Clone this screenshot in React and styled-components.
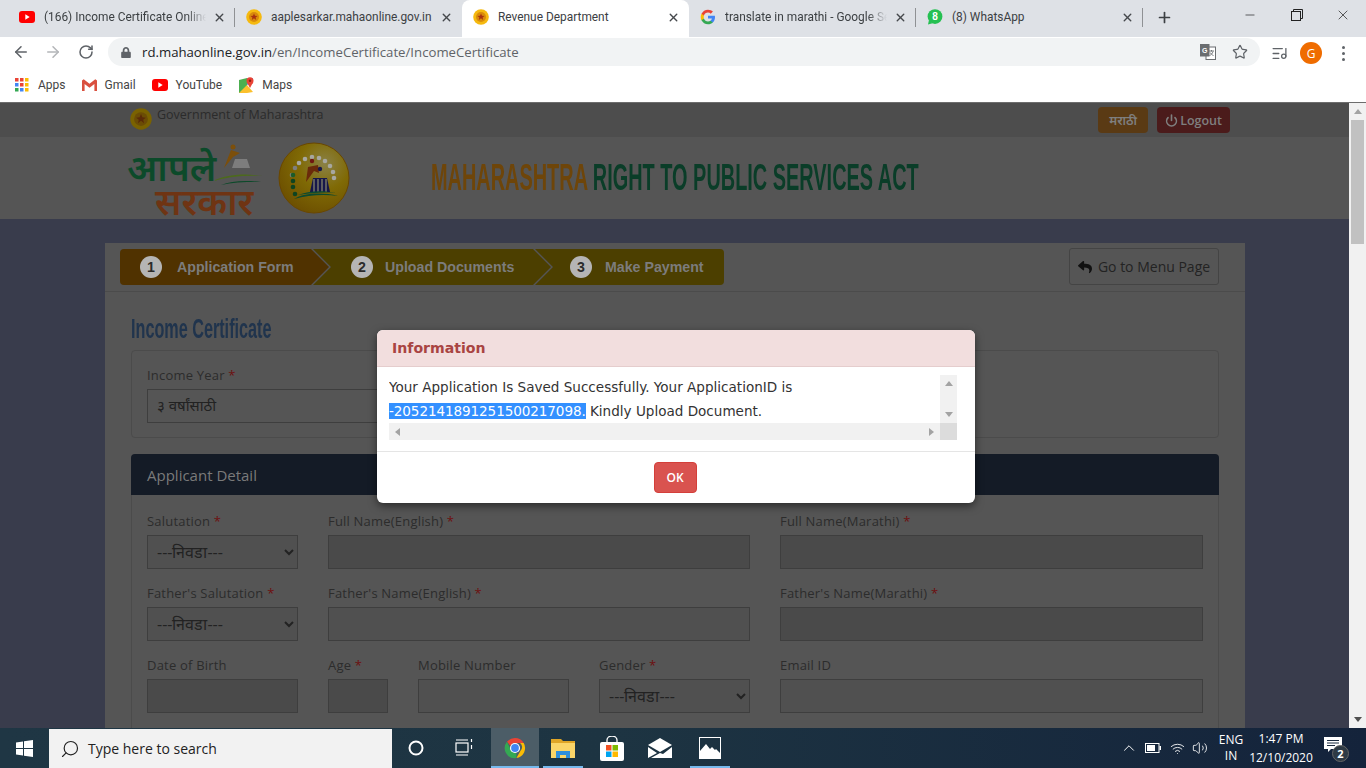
import React from "react";
import styled, { createGlobalStyle } from "styled-components";
import { ArrowLeft, ArrowRight, RotateCw, Star, X, Plus, Minus, ChevronUp, Power, ListMusic, Search, Volume2, Wifi } from "lucide-react";
import { FaReply, FaLock } from "react-icons/fa";

const GlobalStyle = createGlobalStyle`
  html, body { margin: 0; padding: 0; overflow: hidden; }
  * { box-sizing: border-box; }
  body { font-family: "Open Sans", "Noto Sans", sans-serif; }
`;

const Screen = styled.div`
  width: 1366px;
  height: 768px;
  display: flex;
  flex-direction: column;
  overflow: hidden;
  background: #fff;
`;

/* browser chrome */
const TabStrip = styled.div`
  height: 37px;
  flex: none;
  background: #dee1e6;
  display: flex;
  padding-left: 8px;
  color: #3c4043;
`;

const Tab = styled.div`
  width: 227px;
  height: 37px;
  padding: 0 9px 3px 11px;
  display: flex;
  align-items: center;
  gap: 9px;
  position: relative;
  font-family: Roboto, "Open Sans", sans-serif;
  font-size: 11.9px;
  background: ${(p) => (p.$active ? "#fff" : "transparent")};
  border-radius: ${(p) => (p.$active ? "8px 8px 0 0" : "0")};

  &::after {
    content: "";
    display: ${(p) => (p.$sep ? "block" : "none")};
    position: absolute;
    right: 0;
    top: 8px;
    height: 19px;
    width: 1px;
    background: #8f9194;
  }
`;

const TabTitle = styled.span`
  flex: 1;
  min-width: 0;
  white-space: nowrap;
  overflow: hidden;
  ${(p) =>
    p.$fade &&
    "-webkit-mask-image: linear-gradient(90deg, #000 88%, transparent); mask-image: linear-gradient(90deg, #000 88%, transparent);"}
`;

const TabClose = styled(X)`
  flex: none;
  width: 13px;
  height: 13px;
  margin-left: -2px;
  color: #45484c;
  stroke-width: 2.6;
`;

const NewTab = styled(Plus)`
  width: 17px;
  height: 17px;
  margin: 9px 0 0 13px;
  color: #3c4043;
  stroke-width: 2.4;
`;

const WindowControls = styled.div`
  margin-left: auto;
  display: flex;
  height: 30px;
`;

const WindowButton = styled.div`
  width: 46.5px;
  display: flex;
  align-items: center;
  justify-content: center;
  color: #222;
`;

const Toolbar = styled.div`
  height: 34px;
  flex: none;
  display: flex;
  padding: 1px 0 0 5px;
  background: #fff;
`;

const NavButton = styled.div`
  width: 32px;
  height: 28px;
  flex: none;
  display: flex;
  align-items: center;
  justify-content: center;
  color: ${(p) => (p.$off ? "#b4b6b9" : "#5f6368")};
`;

const Omnibox = styled.div`
  width: 1152px;
  height: 28px;
  margin-left: 7px;
  padding: 0 13px;
  flex: none;
  display: flex;
  align-items: center;
  background: #f1f3f4;
  border-radius: 14px;
  font-size: 13.2px;
  color: #5f6368;
`;

const LockIcon = styled(FaLock)`
  width: 10px;
  height: 11px;
  color: #5f6368;
  margin: 0 11px 0 0;
`;

const UrlHost = styled.span`
  color: #202124;
`;

const OmniActions = styled.div`
  margin-left: auto;
  display: flex;
  align-items: center;
  gap: 16px;
  margin-right: -1px;
  color: #5f6368;
`;

const Avatar = styled.div`
  width: 22px;
  height: 22px;
  margin: 0 12px;
  border-radius: 50%;
  background: #ef6c00;
  color: #fff;
  font-size: 12px;
  display: flex;
  align-items: center;
  justify-content: center;
`;

const ToolbarRight = styled.div`
  display: flex;
  align-items: center;
  height: 30px;
  padding-left: 11px;
  color: #5f6368;
`;

const Dots = styled.div`
  display: grid;
  gap: 3px;
  margin-left: 8px;

  i {
    display: block;
    width: 3px;
    height: 3px;
    border-radius: 50%;
    background: #5f6368;
  }
`;

const Bookmarks = styled.div`
  height: 32px;
  flex: none;
  display: flex;
  align-items: center;
  padding: 0 0 3px 15px;
  font-family: Roboto, "Open Sans", sans-serif;
  font-size: 12px;
  color: #444;
  background: #fff;
  border-bottom: 1px solid #6d6d6d;
`;

const Bookmark = styled.div`
  display: flex;
  align-items: center;
  gap: ${(p) => p.$inner || 8}px;
  margin-right: ${(p) => p.$gap}px;
`;

/* page */
const PageArea = styled.div`
  flex: 1;
  min-height: 0;
  display: flex;
`;

const Viewport = styled.div`
  flex: 1;
  min-width: 0;
  position: relative;
  overflow: hidden;
  background: #393c4c;
`;

const Scrollbar = styled.div`
  width: 17px;
  flex: none;
  display: flex;
  flex-direction: column;
  align-items: center;
  background: #f1f1f1;
  padding-top: 6px;
`;

const ArrowUp = styled.div`
  width: 0;
  height: 0;
  border-left: 4px solid transparent;
  border-right: 4px solid transparent;
  border-bottom: 5px solid #a3a3a3;
`;

const ArrowDown = styled.div`
  width: 0;
  height: 0;
  margin-top: auto;
  margin-bottom: 6px;
  border-left: 4px solid transparent;
  border-right: 4px solid transparent;
  border-top: 5px solid #505050;
`;

const Thumb = styled.div`
  width: 13px;
  height: 124px;
  margin-top: 6px;
  background: #c1c1c1;
`;

const TopBar = styled.div`
  height: 34px;
  padding: 4px 119px 0 130px;
  display: flex;
  background: #4d4d4d;
  font-size: 12.5px;
  color: #2b2b2b;
`;

const GovName = styled.span`
  margin: 1px 0 0 5px;
  line-height: 14px;
`;

const TopBarActions = styled.div`
  margin-left: auto;
  display: flex;
  gap: 9px;
`;

const TopButton = styled.div`
  height: 26px;
  padding: 0 ${(p) => p.$pad}px;
  display: flex;
  align-items: center;
  gap: 2px;
  border-radius: 4px;
  font-size: 12.5px;
  font-weight: 600;
  color: #7f7f7f;
  background: ${(p) => p.$bg};
`;

const SiteHeader = styled.div`
  height: 82px;
  background: #555;
  display: flex;
  align-items: center;
  padding-left: 127px;
`;

const LogoText = styled.div`
  width: 136px;
  height: 74px;
  padding-top: 6px;
  position: relative;
  font-family: "Noto Sans", "Liberation Sans", sans-serif;
  font-weight: 600;
  margin-top: 6px;
`;

const LogoLine = styled.div`
  font-size: ${(p) => p.$size}px;
  line-height: 34px;
  color: ${(p) => p.$color};
  margin-left: ${(p) => p.$left}px;
  white-space: nowrap;
`;

const LogoDome = styled.svg`
  position: absolute;
  right: 0;
  top: 0;
`;

const SiteTitle = styled.h1`
  margin: 0 0 0 81px;
  font-family: "Liberation Sans", Arial, sans-serif;
  font-weight: 700;
  font-size: 36px;
  line-height: 40px;
  white-space: nowrap;
  color: #0a3d28;
  transform: scaleX(0.553);
  transform-origin: left;

  span {
    color: #6e4509;
  }
`;

const Main = styled.div`
  padding: 24px 104px 0 105px;
`;

const Card = styled.div`
  background: #555;
  min-height: 600px;
`;

const WizardRow = styled.div`
  height: 49px;
  padding: 5px 26px 0 15px;
  display: flex;
  justify-content: space-between;
  border-bottom: 1px solid #4b4b4b;
`;

const Steps = styled.div`
  display: flex;
  height: 36px;
  margin-top: 1px;
`;

const Step = styled.div`
  width: ${(p) => p.$w}px;
  margin-left: ${(p) => (p.$first ? 0 : -16)}px;
  padding-left: ${(p) => p.$pad}px;
  display: flex;
  align-items: center;
  gap: ${(p) => p.$gap}px;
  font-family: "Liberation Sans", Arial, sans-serif;
  font-size: 14.2px;
  font-weight: 700;
  color: #7c7c7c;
  background: ${(p) => (p.$first ? "#503200" : "#4c3f00")};
  border-radius: ${(p) => (p.$first ? "4px 0 0 4px" : p.$last ? "0 4px 4px 0" : "0")};
  clip-path: ${(p) =>
    p.$first
      ? "polygon(0 0, calc(100% - 18px) 0, 100% 50%, calc(100% - 18px) 100%, 0 100%)"
      : p.$last
      ? "polygon(0 0, 100% 0, 100% 100%, 0 100%, 18px 50%)"
      : "polygon(0 0, calc(100% - 18px) 0, 100% 50%, calc(100% - 18px) 100%, 0 100%, 18px 50%)"};
`;

const StepNumber = styled.span`
  width: 22px;
  height: 22px;
  flex: none;
  border-radius: 50%;
  background: #b5b5b5;
  color: #2b2b2b;
  display: flex;
  align-items: center;
  justify-content: center;
`;

const MenuButton = styled.div`
  width: 150px;
  height: 37px;
  display: flex;
  align-items: center;
  justify-content: center;
  gap: 6px;
  border: 1px solid #444;
  border-radius: 3px;
  font-size: 14px;
  color: #232323;
`;

const CardBody = styled.div`
  padding: 0 26px;
`;

const Heading = styled.h2`
  margin: 0;
  padding-top: 22px;
  height: 58px;
  font-family: "Liberation Sans", Arial, sans-serif;
  font-weight: 700;
  font-size: 27px;
  line-height: 30px;
  white-space: nowrap;
  color: #20344d;
  transform: scaleX(0.6);
  transform-origin: left;
`;

const YearPanel = styled.div`
  height: 88px;
  padding: 14px 15px;
  border: 1px solid #4b4b4b;
  border-radius: 4px;
`;

const PanelHead = styled.div`
  height: 41px;
  margin-top: 16px;
  padding-left: 16px;
  display: flex;
  align-items: center;
  border-radius: 4px 4px 0 0;
  background: #141b26;
  color: #7a7a7a;
  font-size: 15px;
`;

const PanelBody = styled.div`
  padding: 16px 15px 15px;
  border: 1px solid #4b4b4b;
  border-top: 0;
  display: grid;
  grid-template-columns: 151px 60px 151px 151px 423px;
  column-gap: 30px;
  row-gap: 14px;
`;

const Field = styled.div`
  grid-column: span ${(p) => p.$span || 1};
  width: ${(p) => (p.$w ? p.$w + "px" : "auto")};
`;

const Label = styled.div`
  height: 20px;
  margin-bottom: 4px;
  font-size: 13px;
  line-height: 20px;
  letter-spacing: 0.2px;
  color: #2c2c2c;

  b {
    font-weight: 400;
    color: #6d1010;
  }
`;

const TextInput = styled.input`
  display: block;
  width: 100%;
  height: 34px;
  padding: 0 12px;
  border: 1px solid #3e3e3e;
  border-radius: 0;
  outline: 0;
  background: ${(p) => (p.readOnly ? "#4a4a4a" : "#505050")};
`;

const Select = styled.select`
  display: block;
  width: 100%;
  height: 34px;
  padding: 0 5px;
  border: 1px solid #3e3e3e;
  border-radius: 0;
  background: #505050;
  color: #222;
  font-family: "Open Sans", sans-serif;
  font-size: 16px;
`;

const YearValue = styled.div`
  height: 34px;
  padding: 0 9px 3px;
  display: flex;
  align-items: center;
  border: 1px solid #3e3e3e;
  font-size: 15px;
  color: #222;
`;

/* modal */
const Modal = styled.div`
  position: absolute;
  left: 377px;
  top: 227px;
  width: 598px;
  height: 173px;
  background: #fff;
  border-radius: 6px;
  overflow: hidden;
  box-shadow: 0 3px 9px rgba(0, 0, 0, 0.5);
`;

const ModalHead = styled.div`
  height: 37px;
  padding-left: 15px;
  display: flex;
  align-items: center;
  background: #f2dede;
  border-bottom: 1px solid #e5cdcd;
  font-family: "DejaVu Sans", Verdana, sans-serif;
  font-weight: 700;
  font-size: 14.1px;
  color: #a94442;
`;

const ModalScroll = styled.div`
  margin: 8px 18px 11px 12px;
  height: 65px;
  display: grid;
  grid-template-columns: 1fr 17px;
  grid-template-rows: 48px 17px;
  font-family: "DejaVu Sans", Verdana, sans-serif;
  font-size: 13.55px;
  line-height: 24px;
  color: #333;
`;

const ModalText = styled.div`
  overflow: hidden;
  white-space: nowrap;

  mark {
    background: #3390ff;
    color: #fff;
    letter-spacing: -0.09px;
  }
`;

const ScrollTrack = styled.div`
  display: flex;
  flex-direction: ${(p) => (p.$row ? "row" : "column")};
  justify-content: space-between;
  align-items: center;
  padding: ${(p) => (p.$row ? "0 6px" : "6px 0")};
  background: #f1f1f1;
`;

const ScrollCorner = styled.div`
  background: #dcdcdc;
`;

const Tri = styled.span`
  width: 0;
  height: 0;
  border: 4px solid transparent;
  ${(p) => p.$dir === "up" && "border-bottom: 5px solid #a3a3a3; border-top: 0;"}
  ${(p) => p.$dir === "down" && "border-top: 5px solid #a3a3a3; border-bottom: 0;"}
  ${(p) => p.$dir === "left" && "border-right: 5px solid #a3a3a3; border-left: 0;"}
  ${(p) => p.$dir === "right" && "border-left: 5px solid #a3a3a3; border-right: 0;"}
`;

const ModalFoot = styled.div`
  height: 52px;
  padding: 10px 2px 0 0;
  border-top: 1px solid #e5e5e5;
  display: flex;
  justify-content: center;
`;

const OkButton = styled.div`
  width: 43px;
  height: 31px;
  display: flex;
  align-items: center;
  justify-content: center;
  border: 1px solid #d43f3a;
  border-radius: 4px;
  background: #d9534f;
  color: #fff;
  font-size: 12px;
  font-weight: 600;
`;

/* windows taskbar */
const Taskbar = styled.div`
  height: 40px;
  flex: none;
  display: flex;
  background: linear-gradient(90deg, #1f3644 0%, #1d3442 45%, #14233b 100%);
  color: #fff;
`;

const StartButton = styled.div`
  width: 49px;
  display: flex;
  align-items: center;
  justify-content: center;
`;

const SearchBox = styled.div`
  width: 343px;
  margin-top: 1px;
  padding-left: 11px;
  display: flex;
  align-items: center;
  gap: 8px;
  background: #f2f2f2;
  color: #222;
  font-size: 14px;
`;

const SearchGlass = styled(Search)`
  width: 20px;
  height: 20px;
  transform: scaleX(-1);
  color: #222;
  stroke-width: 1.4;
`;

const TaskItem = styled.div`
  width: 48px;
  margin-left: ${(p) => p.$ml || 0}px;
  position: relative;
  display: flex;
  align-items: center;
  justify-content: center;
  background: ${(p) => (p.$active ? "#4c5d67" : "transparent")};

  &::after {
    content: "";
    display: ${(p) => (p.$bar ? "block" : "none")};
    position: absolute;
    bottom: 0;
    height: 2px;
    left: ${(p) => (p.$active ? 0 : 4)}px;
    right: ${(p) => (p.$active ? 0 : 4)}px;
    background: #76b9ed;
  }
`;

const Tray = styled.div`
  margin-left: auto;
  display: flex;
  align-items: center;
  font-size: 12px;
`;

const TrayIcon = styled.div`
  width: ${(p) => p.$w}px;
  display: flex;
  justify-content: center;
`;

const TrayStack = styled.div`
  width: ${(p) => p.$w}px;
  margin-left: ${(p) => p.$ml || 0}px;
  text-align: center;
  line-height: ${(p) => p.$lh}px;
`;

const Notify = styled.div`
  width: 34px;
  position: relative;
  display: flex;
  justify-content: center;
  margin: 0 16px 6px 0;
`;

const NotifyBadge = styled.span`
  position: absolute;
  left: 16px;
  top: 8px;
  width: 17px;
  height: 17px;
  border-radius: 50%;
  background: #2e3a45;
  border: 1px solid #666;
  font-size: 11px;
  font-weight: 700;
  display: flex;
  align-items: center;
  justify-content: center;
`;

/* drawings */
const Coin = ({ size = 16 }) => (
  <svg width={size} height={size} viewBox="0 0 16 16" style={{ flex: "none" }}>
    <circle cx="8" cy="8" r="7.8" fill="#f5b90f" />
    <circle cx="8" cy="8" r="5" fill="#d98a0c" />
    <path d="M8 4.4l1 2.4 2.5.2-1.9 1.6.6 2.5L8 9.3l-2.2 1.8.6-2.5L4.5 7 7 6.8z" fill="#a8320f" />
  </svg>
);

const DimCoin = () => (
  <svg width="22" height="22" viewBox="0 0 16 16" style={{ flex: "none", marginTop: 1 }}>
    <circle cx="8" cy="8" r="7.8" fill="#7a6200" />
    <circle cx="8" cy="8" r="5" fill="#6b4c05" />
    <path d="M8 4.4l1 2.4 2.5.2-1.9 1.6.6 2.5L8 9.3l-2.2 1.8.6-2.5L4.5 7 7 6.8z" fill="#5a2a08" />
  </svg>
);

const YouTubeIcon = () => (
  <svg width="16" height="12" viewBox="0 0 16 12" style={{ flex: "none" }}>
    <rect width="16" height="12" rx="3" fill="#f00" />
    <path d="M6.3 3.3l4.4 2.7-4.4 2.7z" fill="#fff" />
  </svg>
);

const GoogleIcon = () => (
  <svg width="16" height="16" viewBox="0 0 48 48" style={{ flex: "none" }}>
    <path fill="#4285f4" d="M45 24.5c0-1.6-.1-3.100-.4-4.500H24v8.500h11.800c-.5 2.700-2.100 5-4.400 6.600v5.500h7.100C42.600 36.800 45 31.200 45 24.500z" />
    <path fill="#34a853" d="M24 46c5.900 0 10.900-2 14.500-5.300l-7.100-5.500c-2 1.300-4.500 2.100-7.400 2.100-5.700 0-10.500-3.800-12.200-9H4.500v5.700C8.100 41.100 15.500 46 24 46z" />
    <path fill="#fbbc05" d="M11.800 28.300c-.4-1.300-.7-2.800-.7-4.300s.3-3 .7-4.300V14H4.500C3 17 2.200 20.400 2.200 24s.8 7 2.300 10z" />
    <path fill="#ea4335" d="M24 10.700c3.200 0 6.100 1.100 8.400 3.300l6.300-6.300C34.900 4.200 29.900 2 24 2 15.500 2 8.100 6.900 4.500 14l7.300 5.700c1.700-5.200 6.500-9 12.200-9z" />
  </svg>
);

const WhatsAppIcon = () => (
  <svg width="16" height="16" viewBox="0 0 16 16" style={{ flex: "none" }}>
    <circle cx="8" cy="7.600" r="7.400" fill="#25c052" />
    <path d="M2 11l-1 4.500 4.500-1.200z" fill="#25c052" />
    <text x="8" y="11" textAnchor="middle" fontSize="10" fontWeight="700" fontFamily="Liberation Sans" fill="#fff">8</text>
  </svg>
);

const AppsIcon = () => {
  const colors = ["#ea4335", "#ea4335", "#fbbc05", "#4285f4", "#ea4335", "#fbbc05", "#34a853", "#4285f4", "#fbbc05"];
  return (
    <svg width="14" height="14" viewBox="0 0 14 14">
      {colors.map((c, i) => (
        <rect key={i} x={(i % 3) * 5} y={Math.floor(i / 3) * 5} width="3.500" height="3.500" fill={c} />
      ))}
    </svg>
  );
};

const GmailIcon = () => (
  <svg width="15" height="12" viewBox="0 0 15 12">
    <path d="M0 1.500V12h2.600V5L7.500 8.800 12.400 5v7H15V1.500L13.300.3 7.500 4.700 1.700.3z" fill="#d9503f" />
  </svg>
);

const MapsIcon = () => (
  <svg width="15" height="16" viewBox="0 0 15 16">
    <path d="M0 3l8-2v14l-8 1z" fill="#4caf50" />
    <path d="M0 16l8-8 6 7-6 1z" fill="#fbc02d" />
    <path d="M8 1l6 0v5l-6 2z" fill="#5e97f6" />
    <circle cx="11" cy="3.800" r="3.500" fill="#ea4335" />
    <circle cx="11" cy="3.800" r="1.200" fill="#8e1c12" />
    <path d="M8.300 6l2.700 5 2.700-5z" fill="#ea4335" />
  </svg>
);

const TranslateIcon = () => (
  <svg width="16" height="16" viewBox="0 0 16 16">
    <rect x="6" y="3" width="9.500" height="12.500" fill="#fff" stroke="#6a6d70" />
    <path d="M0 0h9.500v12.500H0z" fill="#6a6d70" />
    <text x="2" y="9" fontSize="7" fontWeight="700" fontFamily="Liberation Sans" fill="#fff">G</text>
    <path d="M9 7h5M11.500 6v1.500M13 7.500c-.6 2-2 3.500-3.500 4M10.200 8.500c.6 1.300 1.800 2.500 3.300 3" stroke="#6a6d70" strokeWidth=".9" fill="none" />
  </svg>
);

const RoundLogo = () => (
  <svg width="72" height="72" viewBox="0 0 72 72" style={{ marginLeft: 15, flex: "none" }}>
    <defs>
      <radialGradient id="goldBall" cx="65%" cy="30%" r="80%">
        <stop offset="0%" stopColor="#8a8146" />
        <stop offset="45%" stopColor="#806a05" />
        <stop offset="100%" stopColor="#6a4c00" />
      </radialGradient>
    </defs>
    <circle cx="36" cy="36" r="35" fill="url(#goldBall)" stroke="#6a4700" />
    {[[14, 33], [17, 26], [21, 21], [27, 17], [34, 15], [41, 16], [47, 19], [52, 24], [55, 30], [56, 36]].map(([x, y], i) => (
      <circle key={i} cx={x} cy={y} r="2.300" fill={i < 2 ? "#7e7e7e" : "#a7a7a0"} />
    ))}
    <circle cx="15" cy="33" r="2.300" fill="#1b5c2a" />
    <circle cx="15" cy="39" r="2.300" fill="#0e4420" />
    <circle cx="15" cy="45" r="2.300" fill="#0e4420" />
    <circle cx="17" cy="52" r="2.300" fill="#0e4420" />
    <path d="M28 40l2-15 10-2 1 8-5-2z" fill="#6a2a0a" />
    <circle cx="34" cy="19" r="2.200" fill="#6f1612" />
    <circle cx="42" cy="27" r="2.200" fill="#17174a" />
    <path d="M32 50l3-14 14 0 3 14z" fill="#17174a" />
    <path d="M36 37v13M40 37v13M44 37v13M48 37v13" stroke="#8c8c70" strokeWidth="1.200" />
    <path d="M16 57c10-6 28-7 44-3-14-2-30-1-44 3z" fill="#0b4a30" />
    <path d="M20 53c10-4 24-5 38-2-12-1-26 0-38 2z" fill="#0b4a30" />
  </svg>
);

const ChromeIcon = () => (
  <svg width="22" height="22" viewBox="0 0 48 48">
    <path d="M24 2a22 22 0 0 1 19 11H24a11 11 0 0 0-10 6L6.500 10.500A22 22 0 0 1 24 2z" fill="#ea4335" />
    <path d="M43 13a22 22 0 0 1-16 33l9-16a11 11 0 0 0-1-17z" fill="#fbbc05" />
    <path d="M27 46A22 22 0 0 1 6.500 10.500L15.500 29a11 11 0 0 0 11.500 6z" fill="#34a853" />
    <circle cx="24" cy="24" r="11" fill="#fff" />
    <circle cx="24" cy="24" r="8.500" fill="#4285f4" />
  </svg>
);

const ExplorerIcon = () => (
  <svg width="24" height="20" viewBox="0 0 24 20">
    <path d="M0 1h10l2 2h12v17H0z" fill="#e0a526" />
    <path d="M0 5h24v15H0z" fill="#fbd568" />
    <path d="M5 13h14v7h-4v-3H9v3H5z" fill="#2f8fdc" />
  </svg>
);

const StoreIcon = () => (
  <svg width="24" height="25" viewBox="0 0 24 25">
    <path d="M7 7V4a5 4 0 0 1 10 0v3" fill="none" stroke="#fff" strokeWidth="1.300" />
    <rect y="6" width="24" height="19" rx="2" fill="#fff" />
    <rect x="6" y="9" width="5.500" height="5.500" fill="#f25022" />
    <rect x="12.500" y="9" width="5.500" height="5.500" fill="#7fba00" />
    <rect x="6" y="15.500" width="5.500" height="5.500" fill="#00a4ef" />
    <rect x="12.500" y="15.500" width="5.500" height="5.500" fill="#ffb900" />
  </svg>
);

const MailIcon = () => (
  <svg width="24" height="20" viewBox="0 0 24 20">
    <path d="M0 7L12 0l12 7-12 7z" fill="#fff" />
    <path d="M0 9l9 6L0 20zM24 9v11H3l9-5 3 1z" fill="#fff" />
  </svg>
);

const PhotosIcon = () => (
  <svg width="22" height="22" viewBox="0 0 22 22">
    <rect x=".5" y=".5" width="21" height="21" fill="none" stroke="#fff" />
    <path d="M1 21V14l6-7 4 5 2-2 3 3 1-1 4 4v5z" fill="#fff" />
  </svg>
);

const Windows = () => (
  <svg width="17" height="17" viewBox="0 0 17 17">
    <path d="M0 2.500l7-1V8H0zM8 1.300L17 0v8H8zM0 9h7v6.500l-7-1zM8 9h9v8l-9-1.300z" fill="#fff" />
  </svg>
);

const TaskViewIcon = () => (
  <svg width="18" height="20" viewBox="0 0 18 20" fill="none" stroke="#fff" strokeWidth="1.200">
    <rect x="1" y="5" width="12" height="9" />
    <path d="M1 2h12M1 17h12M16.500 1v3M16.500 7v4" />
  </svg>
);

const BatteryIcon = () => (
  <svg width="16" height="10" viewBox="0 0 16 10">
    <rect x=".5" y=".5" width="13.500" height="9" fill="none" stroke="#fff" />
    <rect x="2" y="2" width="8" height="6" fill="#fff" />
    <rect x="14.500" y="3" width="1.500" height="4" fill="#fff" />
  </svg>
);

const RestoreIcon = () => (
  <svg width="12" height="12" viewBox="0 0 12 12" fill="none" stroke="#222" style={{ marginLeft: 1 }}>
    <rect x=".5" y="2.500" width="9" height="9" />
    <path d="M2.500 2.500v-2h9v9h-2" />
  </svg>
);

const NotifyIcon = () => (
  <svg width="18" height="16" viewBox="0 0 18 16">
    <path d="M0 0h18v12H7l-3 3v-3H0z" fill="#fff" />
    <path d="M3 3.500h12M3 6h12M3 8.500h8" stroke="#1b2b3f" />
  </svg>
);

const tabs = [
  { title: "(166) Income Certificate Online", icon: <YouTubeIcon />, sep: true, fade: true },
  { title: "aaplesarkar.mahaonline.gov.in", icon: <Coin /> },
  { title: "Revenue Department", icon: <Coin />, active: true },
  { title: "translate in marathi - Google Search", icon: <GoogleIcon />, sep: true, fade: true },
  { title: "(8) WhatsApp", icon: <WhatsAppIcon />, sep: true },
];

const Req = () => <b>*</b>;

const Choose = () => (
  <Select defaultValue="x">
    <option value="x">---निवडा---</option>
  </Select>
);

const Browser = () => (
  <>
    <TabStrip>
      {tabs.map((t) => (
        <Tab key={t.title} $active={t.active} $sep={t.sep}>
          {t.icon}
          <TabTitle $fade={t.fade}>{t.title}</TabTitle>
          <TabClose />
        </Tab>
      ))}
      <NewTab />
      <WindowControls>
        <WindowButton><Minus size={14} strokeWidth={1.2} /></WindowButton>
        <WindowButton><RestoreIcon /></WindowButton>
        <WindowButton><X size={16} strokeWidth={1.1} /></WindowButton>
      </WindowControls>
    </TabStrip>
    <Toolbar>
      <NavButton><ArrowLeft size={18} strokeWidth={2.1} /></NavButton>
      <NavButton $off><ArrowRight size={18} strokeWidth={2.1} /></NavButton>
      <NavButton><RotateCw size={16} strokeWidth={2.3} style={{ marginLeft: 2 }} /></NavButton>
      <Omnibox>
        <LockIcon />
        <UrlHost>rd.mahaonline.gov.in</UrlHost>/en/IncomeCertificate/IncomeCertificate
        <OmniActions>
          <TranslateIcon />
          <Star size={16} strokeWidth={1.8} />
        </OmniActions>
      </Omnibox>
      <ToolbarRight>
        <ListMusic size={17} strokeWidth={1.8} />
        <Avatar>G</Avatar>
        <Dots><i /><i /><i /></Dots>
      </ToolbarRight>
    </Toolbar>
    <Bookmarks>
      <Bookmark $gap={16} $inner={9}><AppsIcon />Apps</Bookmark>
      <Bookmark $gap={16} $inner={8}><GmailIcon />Gmail</Bookmark>
      <Bookmark $gap={17}><YouTubeIcon />YouTube</Bookmark>
      <Bookmark $gap={0}><MapsIcon />Maps</Bookmark>
    </Bookmarks>
  </>
);

const InfoModal = () => (
  <Modal>
    <ModalHead>Information</ModalHead>
    <ModalScroll>
      <ModalText>
        Your Application Is Saved Successfully. Your ApplicationID is
        <br />
        <mark>-2052141891251500217098.</mark> Kindly Upload Document.
      </ModalText>
      <ScrollTrack><Tri $dir="up" /><Tri $dir="down" /></ScrollTrack>
      <ScrollTrack $row><Tri $dir="left" /><Tri $dir="right" /></ScrollTrack>
      <ScrollCorner />
    </ModalScroll>
    <ModalFoot><OkButton>OK</OkButton></ModalFoot>
  </Modal>
);

const Page = () => (
  <PageArea>
    <Viewport>
      <TopBar>
        <DimCoin />
        <GovName>Government of Maharashtra</GovName>
        <TopBarActions>
          <TopButton $bg="#5a3a14" $pad={11}>मराठी</TopButton>
          <TopButton $bg="#4b1b1b" $pad={8}><Power size={13} strokeWidth={3} />Logout</TopButton>
        </TopBarActions>
      </TopBar>
      <SiteHeader>
        <LogoText>
          <LogoLine $size={37} $color="#0c4a2a" $left={0}>आपले</LogoLine>
          <LogoLine $size={37} $color="#6f3413" $left={28}>सरकार</LogoLine>
          <LogoDome width="50" height="42" viewBox="0 0 50 42">
            <circle cx="20" cy="3" r="2.500" fill="#7c4f0b" />
            <path d="M11 24L18 6l9 3-7 4z" fill="#7c4f0b" />
            <path d="M19 24l3-9h12l3 9z" fill="#7d7d7d" />
            <path d="M0 37c12-6 30-8 50-5-16-1-34 0-50 5z" fill="#4d6b1c" />
            <path d="M8 41c10-4 24-5 40-3-14 0-28 0-40 3z" fill="#0c4a2a" />
          </LogoDome>
        </LogoText>
        <RoundLogo />
        <SiteTitle><span>MAHARASHTRA</span> RIGHT TO PUBLIC SERVICES ACT</SiteTitle>
      </SiteHeader>
      <Main>
        <Card>
          <WizardRow>
            <Steps>
              <Step $first $w={209} $pad={20} $gap={15}><StepNumber>1</StepNumber>Application Form</Step>
              <Step $w={238} $pad={38} $gap={12}><StepNumber>2</StepNumber>Upload Documents</Step>
              <Step $last $w={189} $pad={35} $gap={13}><StepNumber>3</StepNumber>Make Payment</Step>
            </Steps>
            <MenuButton><FaReply size={14} color="#111" />Go to Menu Page</MenuButton>
          </WizardRow>
          <CardBody>
            <Heading>Income Certificate</Heading>
            <YearPanel>
              <Field $w={423}>
                <Label>Income Year <Req /></Label>
                <YearValue>३ वर्षांसाठी</YearValue>
              </Field>
            </YearPanel>
            <PanelHead>Applicant Detail</PanelHead>
            <PanelBody>
              <Field><Label>Salutation <Req /></Label><Choose /></Field>
              <Field $span={3}><Label>Full Name(English) <Req /></Label><TextInput readOnly /></Field>
              <Field><Label>Full Name(Marathi) <Req /></Label><TextInput readOnly /></Field>
              <Field><Label>Father's Salutation <Req /></Label><Choose /></Field>
              <Field $span={3}><Label>Father's Name(English) <Req /></Label><TextInput /></Field>
              <Field><Label>Father's Name(Marathi) <Req /></Label><TextInput readOnly /></Field>
              <Field><Label>Date of Birth</Label><TextInput readOnly /></Field>
              <Field><Label>Age <Req /></Label><TextInput readOnly /></Field>
              <Field><Label>Mobile Number</Label><TextInput /></Field>
              <Field><Label>Gender <Req /></Label><Choose /></Field>
              <Field><Label>Email ID</Label><TextInput /></Field>
            </PanelBody>
          </CardBody>
        </Card>
      </Main>
      <InfoModal />
    </Viewport>
    <Scrollbar>
      <ArrowUp />
      <Thumb />
      <ArrowDown />
    </Scrollbar>
  </PageArea>
);

const WinTaskbar = () => (
  <Taskbar>
    <StartButton><Windows /></StartButton>
    <SearchBox><SearchGlass />Type here to search</SearchBox>
    <TaskItem><svg width="16" height="16" viewBox="0 0 16 16"><circle cx="8" cy="8" r="6.500" fill="none" stroke="#fff" strokeWidth="2" /></svg></TaskItem>
    <TaskItem><TaskViewIcon /></TaskItem>
    <TaskItem $ml={3} $active $bar><ChromeIcon /></TaskItem>
    <TaskItem $bar><ExplorerIcon /></TaskItem>
    <TaskItem $ml={1}><StoreIcon /></TaskItem>
    <TaskItem><MailIcon /></TaskItem>
    <TaskItem $ml={2} $bar><PhotosIcon /></TaskItem>
    <Tray>
      <TrayIcon $w={24}><ChevronUp size={18} strokeWidth={1.3} /></TrayIcon>
      <TrayIcon $w={24}><BatteryIcon /></TrayIcon>
      <TrayIcon $w={24}><Wifi size={15} strokeWidth={1.4} /></TrayIcon>
      <TrayIcon $w={22}><Volume2 size={16} strokeWidth={1.3} /></TrayIcon>
      <TrayStack $w={30} $ml={5} $lh={16}>ENG<br />IN</TrayStack>
      <TrayStack $w={70} $lh={19}>1:47 PM<br />12/10/2020</TrayStack>
      <Notify><NotifyIcon /><NotifyBadge>2</NotifyBadge></Notify>
    </Tray>
  </Taskbar>
);

export default function App() {
  return (
    <Screen>
      <GlobalStyle />
      <Browser />
      <Page />
      <WinTaskbar />
    </Screen>
  );
}
